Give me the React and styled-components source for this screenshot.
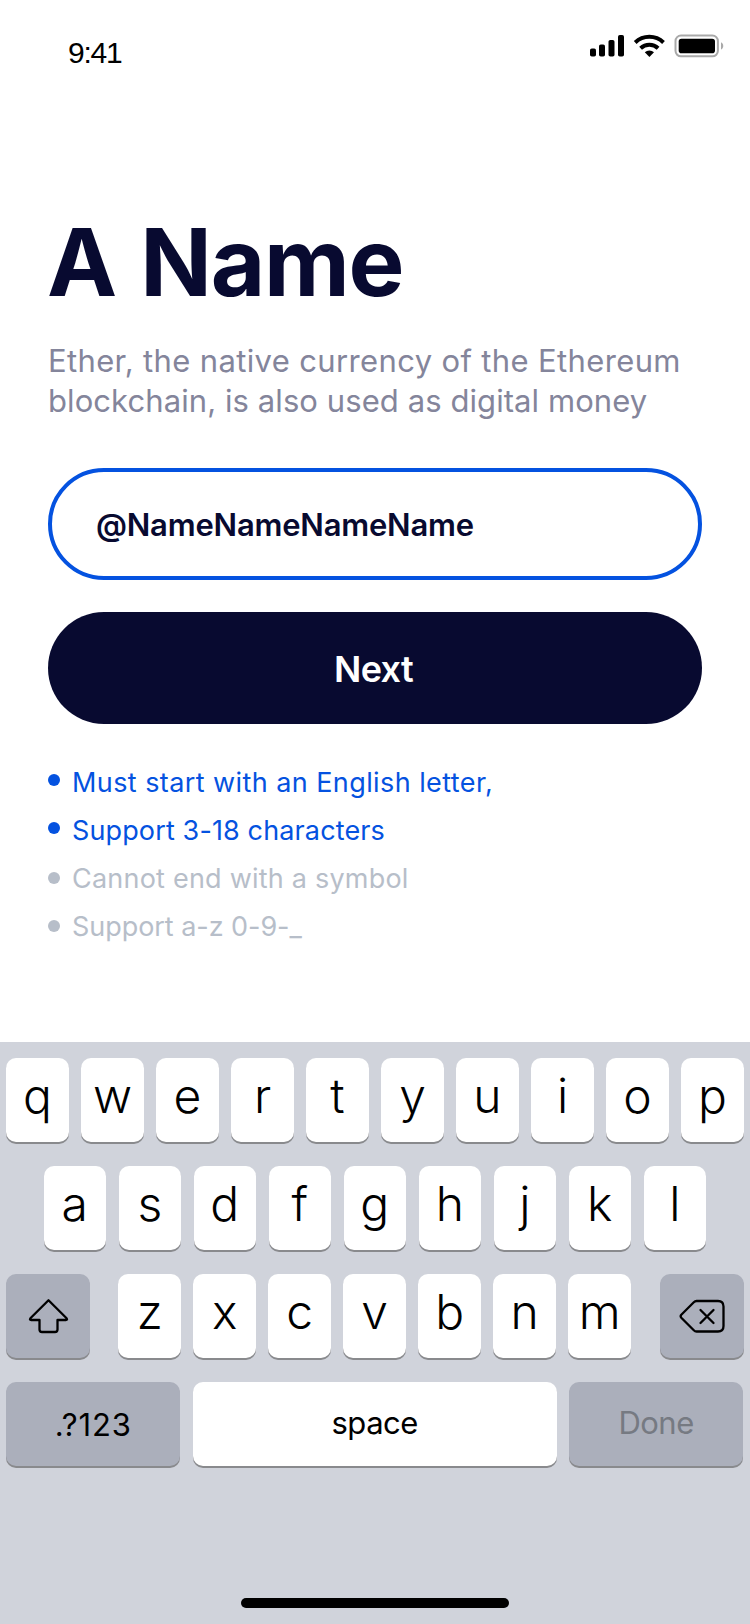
import React from "react";
import styled, { createGlobalStyle, css } from "styled-components";

const Global = createGlobalStyle`
  * { box-sizing: border-box; }
  body { margin: 0; background: #fff; font-family: Inter, "Liberation Sans", sans-serif; }
`;

const Screen = styled.main`
  width: 750px;
  height: 1624px;
  display: flex;
  flex-direction: column;
  background: #fff;
  overflow: hidden;
`;

const StatusBar = styled.header`
  display: flex;
  justify-content: space-between;
  align-items: flex-start;
  height: 88px;
  padding: 34px 26px 0 68px;
`;

const Time = styled.span`
  margin-top: 1px;
  font: 400 30px/36px "Liberation Sans", Arial, sans-serif;
  letter-spacing: -1.2px;
  color: #000;
`;

const Content = styled.section`
  display: flex;
  flex-direction: column;
  height: 954px;
  padding: 120px 48px 0;
`;

const Title = styled.h1`
  margin: 0 0 0 -1px;
  font-size: 94px;
  line-height: 108px;
  font-weight: 650;
  letter-spacing: -1.3px;
  word-spacing: 3.5px;
  color: #080a30;
  white-space: nowrap;
`;

const Lead = styled.p`
  margin: 25px 0 0;
  font-size: 31px;
  line-height: 40px;
  color: #84859b;
  white-space: nowrap;
`;

const LeadLine = styled.span`
  display: block;
  letter-spacing: ${(p) => p.$tracking}px;
`;

const Pill = styled.div`
  flex: none;
  height: 112px;
  width: 654px;
  border-radius: 56px;
  display: flex;
  align-items: center;
`;

const Field = styled(Pill)`
  margin-top: 47px;
  padding-left: 44px;
  border: 4px solid #0452e0;
  font-size: 31px;
  font-weight: 600;
  letter-spacing: -0.2px;
  color: #080a30;
`;

const NextButton = styled(Pill).attrs({ as: "button", type: "button" })`
  margin-top: 32px;
  border: 0;
  padding: 2px 3px 0 0;
  justify-content: center;
  background: #080a30;
  color: #fff;
  font: 600 36px/44px Inter, sans-serif;
  letter-spacing: -0.7px;
`;

const Rules = styled.ul`
  list-style: none;
  margin: 34px 0 0;
  padding: 0;
`;

const Rule = styled.li`
  display: flex;
  align-items: center;
  height: 48px;
  gap: 12px;
  font-size: 27px;
  white-space: nowrap;
  letter-spacing: ${(p) => p.$tracking}px;
  color: ${(p) => (p.$met ? "#0452e0" : "#b7bec9")};

  &::before {
    content: "";
    width: 12px;
    height: 12px;
    margin-bottom: ${(p) => (p.$met ? 4 : 0)}px;
    border-radius: 50%;
    background: currentColor;
  }
`;

const Keyboard = styled.section`
  flex: 1;
  display: flex;
  flex-direction: column;
  align-items: center;
  padding: 16px 6.25px;
  background: #d0d3db;
`;

const KeyRows = styled.div`
  display: flex;
  flex-direction: column;
  gap: 24px;
  width: 100%;
`;

const KeyRow = styled.div`
  display: flex;
  justify-content: ${(p) => (p.$spread ? "space-between" : "center")};
  gap: ${(p) => (p.$spread ? 0 : 12.5)}px;
  padding-right: ${(p) => p.$inset || 0}px;
  height: 84px;
`;

const KeyGroup = styled.div`
  display: flex;
  gap: 12.5px;
  margin-right: 0.6px;
`;

const Key = styled.button`
  display: flex;
  justify-content: center;
  align-items: center;
  flex: none;
  width: ${(p) => p.$width || 62.5}px;
  height: 84px;
  border: 0;
  padding: ${(p) => p.$drop || 0}px 0 ${(p) => p.$lift ?? 9}px;
  border-radius: 10px;
  background: #fff;
  box-shadow: 0 2px 0 #898a8d;
  color: #000;
  font: 340 48px/60px Inter, sans-serif;
  ${(p) =>
    p.$label &&
    css`
      font-size: 31px;
      font-weight: 400;
      letter-spacing: ${p.$tracking ?? -0.5}px;
    `}
  ${(p) => p.$dark && css`background: #abafbb;`}
  ${(p) => p.$muted && css`color: #767a82;`}
`;

const HomeIndicator = styled.div`
  margin-top: auto;
  width: 268px;
  height: 10px;
  border-radius: 5px;
  background: #000;
`;

const StatusIcons = () => (
  <svg width="134" height="24" viewBox="590 34 134 24">
    <rect x="590" y="48.5" width="6" height="8" rx="1.8" />
    <rect x="599" y="44.5" width="6" height="12" rx="1.8" />
    <rect x="608.5" y="40" width="6" height="16.5" rx="1.8" />
    <rect x="618" y="35" width="6" height="21.5" rx="1.8" />
    <g fill="none" stroke="#000" strokeWidth="4">
      <path d="M635.2 42.5a20.6 20.6 0 0 1 28.3 0" />
      <path d="M640.6 48.2a12.8 12.8 0 0 1 17.5 0" />
    </g>
    <path d="M644.8 52.3a6.7 6.7 0 0 1 9.2 0l-4.6 4.6z" />
    <rect x="675.5" y="35.5" width="42.4" height="20.8" rx="5.5" fill="none" stroke="#a9a9a9" strokeWidth="2" />
    <rect x="678.7" y="38.7" width="36.3" height="14.5" rx="2.8" />
    <path d="M721 42.3c3 1.3 3 6 0 7.3z" fill="#a9a9a9" />
  </svg>
);

const ShiftIcon = () => (
  <svg width="42" height="36" viewBox="-1 0 42 36" fill="none" stroke="#000" strokeWidth="2.3" strokeLinejoin="round">
    <path d="M20.5 2.3 38.6 20.3Q39.8 22 37.8 22H29.5V31.5Q29.5 34 27 34H14Q11.5 34 11.5 31.5V22H3.2Q1.2 22 2.4 20.3Z" />
  </svg>
);

const DeleteIcon = () => (
  <svg width="46" height="35" viewBox="0 0 46 35" fill="none" stroke="#000" strokeWidth="2.3" strokeLinecap="round" strokeLinejoin="round">
    <path d="M17.5 2H39Q44.5 2 44.5 7.5V27Q44.5 32.5 39 32.5H17.5Q16 32.5 14.8 31.3L2.3 18.7Q1 17.2 2.3 15.8L14.8 3.2Q16 2 17.5 2Z" />
    <path d="M21.5 11 34.5 24M34.5 11 21.5 24" />
  </svg>
);

const rules = [
  { text: "Must start with an English letter,", met: true, tracking: 0.42 },
  { text: "Support 3-18 characters", met: true, tracking: 0.13 },
  { text: "Cannot end with a symbol", met: false, tracking: 0.22 },
  { text: "Support a-z 0-9-_", met: false, tracking: -0.05 },
];

const letters = (row) => [...row].map((c) => <Key key={c}>{c}</Key>);

export default function App() {
  return (
    <Screen>
      <Global />
      <StatusBar>
        <Time>9:41</Time>
        <StatusIcons />
      </StatusBar>
      <Content>
        <Title>A Name</Title>
        <Lead>
          <LeadLine $tracking={0.36}>Ether, the native currency of the Ethereum</LeadLine>
          <LeadLine $tracking={0.08}>blockchain, is also used as digital money</LeadLine>
        </Lead>
        <Field>@NameNameNameName</Field>
        <NextButton>Next</NextButton>
        <Rules>
          {rules.map((r) => (
            <Rule key={r.text} $met={r.met} $tracking={r.tracking}>
              {r.text}
            </Rule>
          ))}
        </Rules>
      </Content>
      <Keyboard>
        <KeyRows>
          <KeyRow>{letters("qwertyuiop")}</KeyRow>
          <KeyRow $inset={0.4}>{letters("asdfghjkl")}</KeyRow>
          <KeyRow $spread>
            <Key $width={84} $dark $lift={0} aria-label="Shift"><ShiftIcon /></Key>
            <KeyGroup>{letters("zxcvbnm")}</KeyGroup>
            <Key $width={84} $dark $lift={0} aria-label="Delete"><DeleteIcon /></Key>
          </KeyRow>
          <KeyRow $spread $inset={0.7}>
            <Key $width={174} $dark $label $lift={0} $drop={2} $tracking={0.9}>.?123</Key>
            <Key $width={364} $label $lift={2}>space</Key>
            <Key $width={174} $dark $label $muted $lift={2}>Done</Key>
          </KeyRow>
        </KeyRows>
        <HomeIndicator />
      </Keyboard>
    </Screen>
  );
}
